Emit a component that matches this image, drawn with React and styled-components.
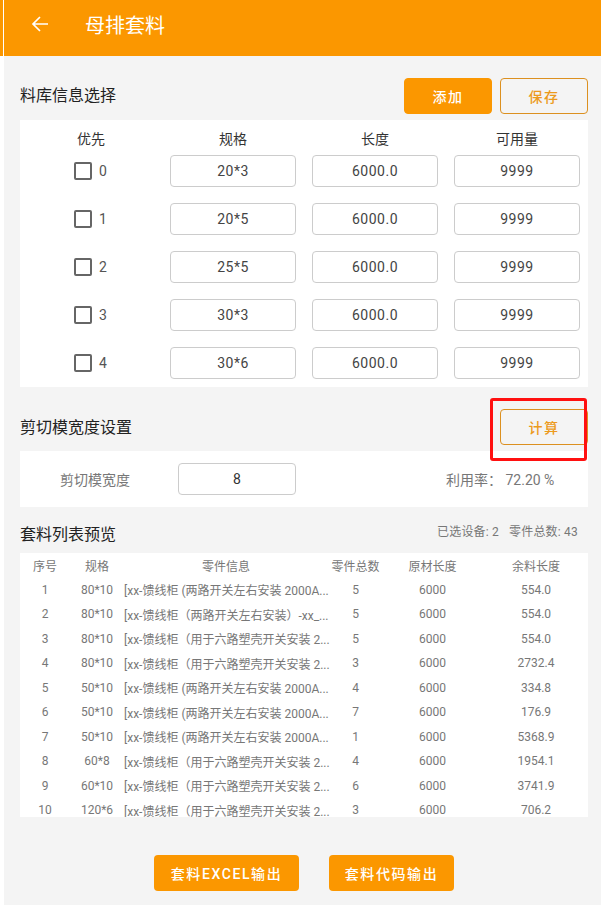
import React from "react";
import styled, { createGlobalStyle } from "styled-components";

const stockRows = [
  ["0", "20*3"],
  ["1", "20*5"],
  ["2", "25*5"],
  ["3", "30*3"],
  ["4", "30*6"],
];

const INFO_A = "[xx-馈线柜 (两路开关左右安装 2000A...";
const INFO_B = "[xx-馈线柜（两路开关左右安装）-xx_...";
const INFO_C = "[xx-馈线柜（用于六路塑壳开关安装 2...";

const nestRows = [
  ["1", "80*10", INFO_A, "5", "6000", "554.0"],
  ["2", "80*10", INFO_B, "5", "6000", "554.0"],
  ["3", "80*10", INFO_C, "5", "6000", "554.0"],
  ["4", "80*10", INFO_C, "3", "6000", "2732.4"],
  ["5", "50*10", INFO_A, "4", "6000", "334.8"],
  ["6", "50*10", INFO_A, "7", "6000", "176.9"],
  ["7", "50*10", INFO_A, "1", "6000", "5368.9"],
  ["8", "60*8", INFO_C, "4", "6000", "1954.1"],
  ["9", "60*10", INFO_C, "6", "6000", "3741.9"],
  ["10", "120*6", INFO_C, "3", "6000", "706.2"],
];

export default function App() {
  return (
    <Page>
      <GlobalStyle />
      <Header>
        <BackButton aria-label="back">
          <svg width="20" height="20" viewBox="0 0 20 20" fill="none" stroke="#fff" strokeWidth="1.7">
            <path d="M18 10H3M10 3l-7 7 7 7" />
          </svg>
        </BackButton>
        <HeaderTitle>母排套料</HeaderTitle>
      </Header>

      <Content>
        <SectionHead>
          <SectionTitle $lift={4}>料库信息选择</SectionTitle>
          <Buttons>
            <ActionButton $filled>添加</ActionButton>
            <ActionButton>保存</ActionButton>
          </Buttons>
        </SectionHead>

        <StockPanel>
          <StockGrid>
            <ColumnLabel $width={142}>优先</ColumnLabel>
            <ColumnLabel>规格</ColumnLabel>
            <ColumnLabel>长度</ColumnLabel>
            <ColumnLabel>可用量</ColumnLabel>
            {stockRows.map(([index, spec]) => (
              <React.Fragment key={index}>
                <CheckCell>
                  <CheckBox />
                  <span>{index}</span>
                </CheckCell>
                <ValueBox>{spec}</ValueBox>
                <ValueBox>6000.0</ValueBox>
                <ValueBox>9999</ValueBox>
              </React.Fragment>
            ))}
          </StockGrid>
        </StockPanel>

        <SectionHead>
          <SectionTitle $lift={2}>剪切模宽度设置</SectionTitle>
          <ActionButton>计算</ActionButton>
          <Highlight />
        </SectionHead>

        <WidthPanel>
          <WidthLabel>剪切模宽度</WidthLabel>
          <WidthInput>8</WidthInput>
          <Usage>利用率： 72.20 %</Usage>
        </WidthPanel>

        <ListHead>
          <SectionTitle>套料列表预览</SectionTitle>
          <Totals>
            <span>已选设备: 2</span>
            <span>零件总数: 43</span>
          </Totals>
        </ListHead>

        <ListPanel>
          <ListRow>
            <Cell>序号</Cell>
            <Cell>规格</Cell>
            <Cell>零件信息</Cell>
            <Cell>零件总数</Cell>
            <Cell>原材长度</Cell>
            <Cell>余料长度</Cell>
          </ListRow>
          {nestRows.map((row) => (
            <ListRow key={row[0]}>
              {row.map((value, i) => (
                <Cell key={i}>{value}</Cell>
              ))}
            </ListRow>
          ))}
        </ListPanel>

        <Footer>
          <FooterButton $width={145}>套料EXCEL输出</FooterButton>
          <FooterButton $width={125}>套料代码输出</FooterButton>
        </Footer>
      </Content>
    </Page>
  );
}

const GlobalStyle = createGlobalStyle`
  html, body {
    margin: 0;
    padding: 0;
    background: #fff;
  }
  * {
    box-sizing: border-box;
  }
`;

const Page = styled.div`
  width: 601px;
  height: 905px;
  overflow: hidden;
  background: #fff;
  font-family: Roboto, "Noto Sans CJK SC", sans-serif;
  color: #333;
`;

const Header = styled.header`
  position: relative;
  height: 56px;
  padding-left: 30px;
  display: flex;
  align-items: center;
  background: #fb9700;

  &::before {
    content: "";
    position: absolute;
    left: 3px;
    top: 0;
    bottom: 0;
    width: 1px;
    background: #fff;
  }
`;

const BackButton = styled.div`
  width: 20px;
  height: 20px;
  margin-top: -8px;
`;

const HeaderTitle = styled.div`
  margin-left: 35px;
  margin-top: -8px;
  font-size: 20px;
  color: #fff;
`;

const Content = styled.main`
  margin-left: 4px;
  height: 849px;
  padding: 22px 13px 0 16px;
  background: #f4f4f4;
`;

const SectionHead = styled.div`
  position: relative;
  height: 36px;
  display: flex;
  align-items: center;
  justify-content: space-between;
`;

const SectionTitle = styled.div`
  margin-bottom: ${(p) => p.$lift || 0}px;
  font-size: 16px;
  color: #222;
`;

const Buttons = styled.div`
  display: flex;
  gap: 8px;
`;

const ActionButton = styled.div`
  width: 88px;
  height: 36px;
  display: flex;
  align-items: center;
  justify-content: center;
  border-radius: 4px;
  font-size: 14px;
  font-weight: 500;
  letter-spacing: 1.5px;
  border: 1px solid ${(p) => (p.$filled ? "#fb9700" : "#dc9020")};
  background: ${(p) => (p.$filled ? "#fb9700" : "transparent")};
  color: ${(p) => (p.$filled ? "#fff" : "#ec9a1c")};
`;

const Highlight = styled.div`
  position: absolute;
  top: -11px;
  right: 1px;
  width: 97px;
  height: 63px;
  border: 3px solid #ff1010;
  border-radius: 3px;
`;

const StockPanel = styled.section`
  margin-top: 6px;
  margin-bottom: 22px;
  height: 267px;
  background: #fff;
`;

const StockGrid = styled.div`
  display: grid;
  grid-template-columns: 150px 142px 142px 126px;
  grid-template-rows: 35px;
  grid-auto-rows: 48px;
`;

const ColumnLabel = styled.div`
  width: ${(p) => p.$width || 126}px;
  display: flex;
  align-items: center;
  justify-content: center;
  font-size: 14px;
  color: #333;
`;

const CheckCell = styled.div`
  height: 32px;
  padding-left: 54px;
  display: flex;
  align-items: center;
  gap: 7px;
  font-size: 14px;
  color: #555;
`;

const CheckBox = styled.div`
  width: 18px;
  height: 18px;
  border: 2px solid #666;
  border-radius: 2px;
`;

const ValueBox = styled.div`
  width: 126px;
  height: 32px;
  display: flex;
  align-items: center;
  justify-content: center;
  border: 1px solid #ccc;
  border-radius: 4px;
  font-size: 14px;
  letter-spacing: 0.5px;
  color: #444;
`;

const WidthPanel = styled.section`
  height: 56px;
  margin-top: 6px;
  display: flex;
  align-items: center;
  background: #fff;
  font-size: 14px;
  color: #777;
`;

const WidthLabel = styled.div`
  width: 158px;
  padding-left: 40px;
`;

const WidthInput = styled.div`
  width: 118px;
  height: 32px;
  display: flex;
  align-items: center;
  justify-content: center;
  border: 1px solid #ccc;
  border-radius: 4px;
  color: #333;
`;

const Usage = styled.div`
  margin-left: 150px;
  white-space: nowrap;
`;

const ListHead = styled.div`
  height: 46px;
  display: flex;
  align-items: flex-end;
  justify-content: space-between;
  padding-bottom: 8px;
`;

const Totals = styled.div`
  display: flex;
  gap: 10px;
  padding-right: 10px;
  padding-bottom: 6px;
  font-size: 12px;
  letter-spacing: 0.2px;
  color: #777;
`;

const ListPanel = styled.section`
  height: 264px;
  overflow: hidden;
  background: #fff;
`;

const ListRow = styled.div`
  height: 24.5px;
  display: grid;
  grid-template-columns: 50px 54px 204px 55px 99px 108px;
  align-items: center;
`;

const Cell = styled.div`
  text-align: center;
  white-space: nowrap;
  font-size: 12px;
  color: #777;
`;

const Footer = styled.div`
  margin-top: 38px;
  display: flex;
  justify-content: center;
  gap: 30px;
`;

const FooterButton = styled.div`
  width: ${(p) => p.$width}px;
  height: 36px;
  display: flex;
  align-items: center;
  justify-content: center;
  border-radius: 4px;
  background: #fb9700;
  color: #fff;
  font-size: 14px;
  font-weight: 500;
  letter-spacing: 1.6px;
`;
